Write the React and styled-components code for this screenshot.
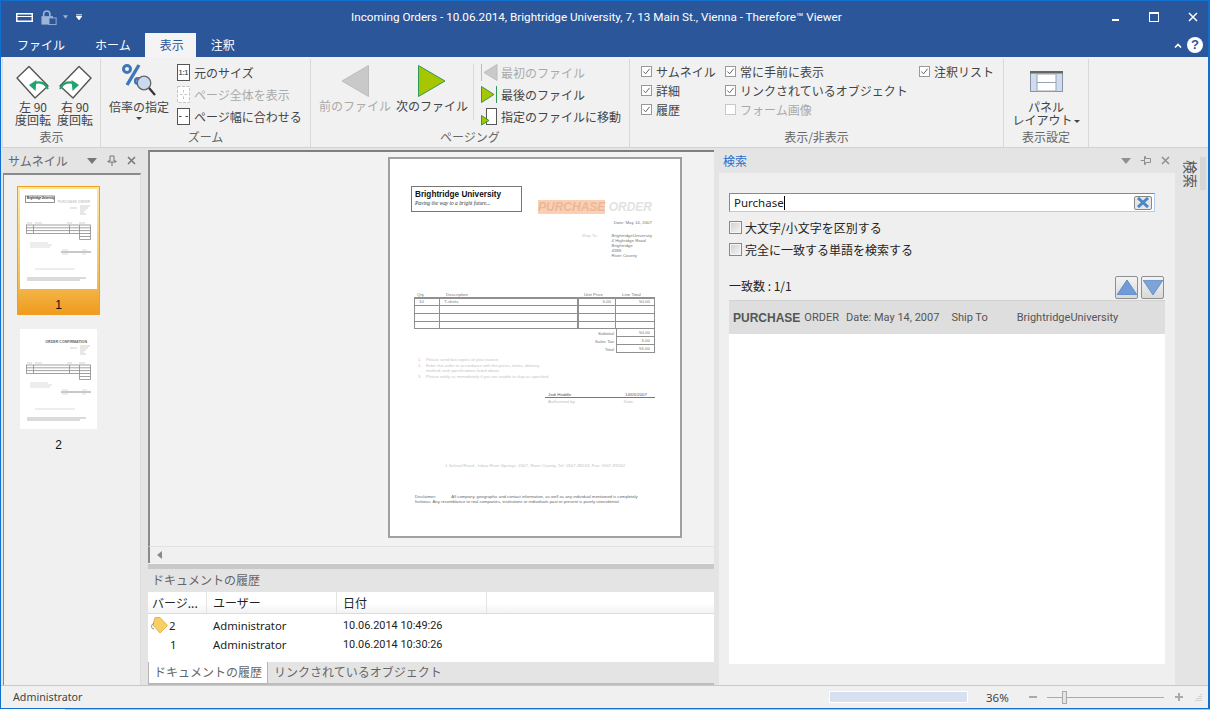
import React from "react";
import styled, { createGlobalStyle } from "styled-components";

const sans = `"Noto Sans", "Noto Sans CJK JP", sans-serif`;
const cjk = `"Noto Sans CJK JP", "Noto Sans", sans-serif`;

const GlobalStyle = createGlobalStyle`
  html, body {
    margin: 0;
    height: 710px;
    background: #fff;
    overflow: hidden;
  }
  * { box-sizing: border-box; }
`;

function RotateIcon({ flip }) {
  return (
    <svg width="34" height="34" viewBox="0 0 34 34" style={flip ? { transform: "scaleX(-1)" } : undefined}>
      <path d="M13 1.5 L32 21 L19 33 L1 13 Z" fill="#fff" stroke="#555" strokeWidth="1.4" strokeLinejoin="round" />
      <path d="M32 24 C29 18 24 16 18 18.5" fill="none" stroke="#22a36b" strokeWidth="2" />
      <path d="M13 20 L20.5 15 L19.5 26 Z" fill="#22a36b" />
    </svg>
  );
}

function ZoomPercentIcon() {
  return (
    <svg width="36" height="36" viewBox="0 0 36 36">
      <circle cx="6" cy="6" r="3.5" fill="none" stroke="#3f76b8" strokeWidth="3" />
      <circle cx="17" cy="18" r="2.8" fill="none" stroke="#3f76b8" strokeWidth="2.6" />
      <path d="M18 2 L6 22" stroke="#3f76b8" strokeWidth="3.4" />
      <circle cx="23" cy="20" r="6.8" fill="#c9d9ef" stroke="#666" strokeWidth="1.3" />
      <path d="M28 25 L34 32" stroke="#333" strokeWidth="2.2" />
    </svg>
  );
}

function SizeIcon({ kind, disabled }) {
  const c = disabled ? "#c4c4c4" : "#555";
  return (
    <svg width="13" height="17" viewBox="0 0 13 17">
      <rect x="0.5" y="0.5" width="12" height="16" fill="#fff" stroke={c} strokeDasharray={kind === "fit" ? "3 1.5" : undefined} />
      {kind === "actual" && (
        <text x="6.5" y="11" fontSize="6.5" fontFamily="Liberation Sans" fontWeight="bold" textAnchor="middle" fill="#555">1:1</text>
      )}
      {kind === "fit" && <path d="M6.5 4 V6.5 M6.5 10.5 V13 M3 8.5 H5.5 M7.5 8.5 H10" stroke={c} />}
      {kind === "width" && <path d="M2 8.5 H4.5 M8.5 8.5 H11" stroke="#444" strokeWidth="1.2" />}
    </svg>
  );
}

function BigArrow({ left, disabled }) {
  const fill = disabled ? "#c9c9c9" : "#a7c500";
  const line = disabled ? "#bdbdbd" : "#2d9a58";
  return (
    <svg width="28" height="32" viewBox="0 0 28 32">
      <path d={left ? "M27.5 0.5 V31.5 L1 16 Z" : "M0.5 0.5 V31.5 L27 16 Z"} fill={fill} stroke={line} strokeWidth="1" />
    </svg>
  );
}

function FirstIcon() {
  return (
    <svg width="17" height="17" viewBox="0 0 17 17">
      <path d="M0.5 0 V17" stroke="#bdbdbd" />
      <path d="M16 0.5 V16.5 L3 8.5 Z" fill="#c9c9c9" stroke="#bdbdbd" />
    </svg>
  );
}

function LastIcon() {
  return (
    <svg width="17" height="17" viewBox="0 0 17 17">
      <path d="M0.5 0.5 V16.5 L13 8.5 Z" fill="#a7c500" stroke="#2d9a58" />
      <path d="M15.5 0 V17" stroke="#2d9a58" />
    </svg>
  );
}

function GotoIcon() {
  return (
    <svg width="17" height="18" viewBox="0 0 17 18">
      <rect x="5.5" y="0.5" width="10" height="16" fill="#fff" stroke="#555" />
      <path d="M0.5 7.5 V17 L8 12.5 Z" fill="#a7c500" stroke="#2d9a58" />
    </svg>
  );
}

function PanelIcon() {
  return (
    <svg width="33" height="21" viewBox="0 0 33 21">
      <rect x="0.5" y="0.5" width="32" height="20" fill="#cfdcef" stroke="#8a93a0" />
      <rect x="0" y="0" width="33" height="2.5" fill="#666" />
      <rect x="7" y="3" width="19" height="17" fill="#fff" stroke="#9aa3b0" />
      <path d="M7 11.5 H26" stroke="#9aa3b0" />
    </svg>
  );
}

function CheckMark() {
  return (
    <svg width="9" height="9" viewBox="0 0 9 9">
      <path d="M1.4 4.5 L3.6 6.8 L7.6 1.8" fill="none" stroke="#666" strokeWidth="1" />
    </svg>
  );
}

function PaneButtons({ subtle }) {
  const c = subtle ? "#8f8f8f" : "#777";
  return (
    <PaneTools>
      <svg width="10" height="6" viewBox="0 0 10 6"><path d="M0 0 H10 L5 6 Z" fill={c} /></svg>
      <svg width="10" height="11" viewBox="0 0 10 11" style={subtle ? { transform: "rotate(90deg)" } : undefined}>
        <path d="M3 1 H7 V6 H9 V7 H1 V6 H3 Z M5 7 V11" fill="none" stroke={c} />
      </svg>
      <svg width="9" height="9" viewBox="0 0 9 9"><path d="M1 1 L8 8 M8 1 L1 8" stroke={c} strokeWidth="1.5" /></svg>
    </PaneTools>
  );
}

function ThumbDrawing({ second }) {
  return (
    <svg width="77" height="100" viewBox="0 0 77 100">
      <rect width="77" height="100" fill="#fff" />
      {second ? (
        <text x="67" y="14" fontSize="3.6" fontFamily="Liberation Sans" fontWeight="bold" textAnchor="end" fill="#666">ORDER CONFIRMATION</text>
      ) : (
        <>
          <rect x="5.5" y="7" width="29" height="6.5" fill="#fff" stroke="#777" strokeWidth="0.8" />
          <text x="7" y="10" fontSize="2.6" fontFamily="Liberation Sans" fontWeight="bold" fill="#222">Brightridge University</text>
          <text x="70" y="14" fontSize="3.4" fontFamily="Liberation Sans" fontWeight="bold" textAnchor="end" fill="#ccc">PURCHASE ORDER</text>
        </>
      )}
      <path d="M50 19 H57 M60 17 H70 M60 19 H68 M60 21 H66 M60 23 H64 M60 25 H66" stroke="#bbb" strokeWidth="0.7" />
      <path d="M7 34 H12 M15 34 H22 M47 34 H52 M59 34 H65" stroke="#bbb" strokeWidth="0.7" />
      <g stroke="#8a8a8a" strokeWidth="0.8" fill="none">
        <rect x="6.5" y="36" width="64" height="8.5" />
        <path d="M6.5 38.8 H70.5 M6.5 41.6 H70.5 M13.5 36 V44.5 M49.5 36 V44.5 M59.5 36 V50.5 M59.5 47.5 H70.5 M59.5 50.5 H70.5 M70.5 44 V50.5" />
      </g>
      <path d="M10 54 H28 M10 56 H32 M10 58 H30" stroke="#ccc" strokeWidth="0.7" />
      <path d="M41 63 H71" stroke="#777" strokeWidth="0.8" />
      <path d="M42 61 H48 M62 61 H67 M42 65 H48 M62 65 H66" stroke="#c4c4c4" strokeWidth="0.6" />
      <path d="M15 80 H55" stroke="#ccc" strokeWidth="0.7" />
      <path d="M7 89 H66 M7 91 H60" stroke="#999" strokeWidth="0.7" />
    </svg>
  );
}

function DocumentPage() {
  return (
    <Page>
      <PageHeader>
        <Brand>
          <BrandName>Brightridge University</BrandName>
          <BrandLine>Paving the way to a bright future...</BrandLine>
        </Brand>
        <PageHeaderRight>
          <DocTitle><mark>PURCHASE</mark> ORDER</DocTitle>
          <DocDate>Date: May 14, 2007</DocDate>
          <ShipRow>
            <ShipLabel>Ship To:</ShipLabel>
            <ShipAddress>
              <div>BrightridgeUniversity</div>
              <div>4 Highridge Road</div>
              <div>Brightridge</div>
              <div>4588</div>
              <div>River County</div>
            </ShipAddress>
          </ShipRow>
        </PageHeaderRight>
      </PageHeader>

      <ItemHeads>
        <span>Qty</span><span>Description</span><span>Unit Price</span><span>Line Total</span>
      </ItemHeads>
      <ItemTable>
        <tbody>
          <tr>
            <td>10</td><td>T-shirts</td><NumCell>5.00</NumCell><NumCell>50.00</NumCell>
          </tr>
          {[0, 1, 2].map((i) => (
            <tr key={i}><td /><td /><td /><td /></tr>
          ))}
        </tbody>
      </ItemTable>
      {[["Subtotal", "50.00"], ["Sales Tax", "5.00"], ["Total", "55.00"]].map(([label, value]) => (
        <TotalRow key={label}>
          <span>{label}</span>
          <TotalValue>{value}</TotalValue>
        </TotalRow>
      ))}

      <Terms>
        <li>Please send two copies of your invoice.</li>
        <li>Enter this order in accordance with the prices, terms, delivery<br />method, and specifications listed above.</li>
        <li>Please notify us immediately if you are unable to ship as specified.</li>
      </Terms>

      <SignBlock>
        <SignTop><span>Jodi Hoddle</span><span>14/05/2007</span></SignTop>
        <SignBottom><span>Authorised by</span><span>Date</span></SignBottom>
      </SignBlock>

      <FootAddress>1 School Road , Isboa River Springs, 4567, River County, Tel: 0567-89243, Fax: 0567-89244</FootAddress>
      <Disclaimer>
        Disclaimer:&nbsp;&nbsp;&nbsp;&nbsp;&nbsp;&nbsp;&nbsp;&nbsp;&nbsp;&nbsp;&nbsp;&nbsp;&nbsp;All company, geographic and contact information, as well as any individual mentioned is completely<br />
        fictitious.  Any resemblance to real companies, institutions or individuals past or present is purely coincidental.
      </Disclaimer>
    </Page>
  );
}

export default function App() {
  return (
    <>
      <GlobalStyle />
      <Window>
        <TitleBar>
          <QuickAccess>
            <svg width="17" height="9" viewBox="0 0 17 9"><rect x="0.75" y="0.75" width="15.5" height="7.5" fill="none" stroke="#fff" strokeWidth="1.5" /><path d="M1 3.5 H16" stroke="#fff" /></svg>
            <svg width="16" height="17" viewBox="0 0 18 17">
              <path d="M3 8 V4.5 C3 0 10 0 10 4.5 V8" fill="none" stroke="#9db4d8" strokeWidth="1.8" />
              <rect x="0.5" y="7" width="13" height="9.5" fill="#9db4d8" />
              <rect x="9" y="9" width="8" height="7.5" fill="#2b579a" stroke="#9db4d8" />
            </svg>
            <svg width="5" height="4" viewBox="0 0 6 4"><path d="M0 0 H6 L3 4 Z" fill="#9db4d8" /></svg>
            <svg width="6" height="6" viewBox="0 0 6 6"><path d="M0 0.5 H6 M0 2 H6 L3 6 Z" fill="#fff" stroke="#fff" strokeWidth="0.6" /></svg>
          </QuickAccess>
          <TitleText>Incoming Orders - 10.06.2014, Brightridge University, 7, 13 Main St., Vienna - Therefore™ Viewer</TitleText>
          <WindowButtons>
            <svg width="8" height="10" viewBox="0 0 8 10"><rect y="7" width="7" height="2" fill="#fff" /></svg>
            <svg width="10" height="10" viewBox="0 0 10 10"><rect x="0.5" y="0.5" width="9" height="9" fill="none" stroke="#fff" /><rect width="10" height="2" fill="#fff" /></svg>
            <svg width="10" height="10" viewBox="0 0 10 10"><path d="M1 1 L9 9 M9 1 L1 9" stroke="#fff" strokeWidth="1.5" /></svg>
          </WindowButtons>
        </TitleBar>

        <TabRow>
          <Tab>ファイル</Tab>
          <Tab>ホーム</Tab>
          <Tab $active>表示</Tab>
          <Tab>注釈</Tab>
          <TabRowEnd>
            <svg width="8" height="5" viewBox="0 0 8 5"><path d="M1 4.5 L4 1.5 L7 4.5" fill="none" stroke="#fff" strokeWidth="1.6" /></svg>
            <HelpBadge>?</HelpBadge>
          </TabRowEnd>
        </TabRow>

        <Ribbon>
          <Group $width={98} $pad="6px 0 0 13px">
            <GroupBody $gap={8}>
              <BigButton $width={34}>
                <RotateIcon />
                <BigLabel>左 90<br />度回転</BigLabel>
              </BigButton>
              <BigButton $width={34}>
                <RotateIcon flip />
                <BigLabel>右 90<br />度回転</BigLabel>
              </BigButton>
            </GroupBody>
            <GroupLabel>表示</GroupLabel>
          </Group>

          <Group $width={210} $pad="4px 0 0 8px">
            <GroupBody $gap={8}>
              <BigButton $width={60}>
                <ZoomPercentIcon />
                <BigLabel>倍率の指定<DownCaret /></BigLabel>
              </BigButton>
              <SmallStack $top={1}>
                <SmallButton><SizeIcon kind="actual" />元のサイズ</SmallButton>
                <SmallButton $disabled><SizeIcon kind="fit" disabled />ページ全体を表示</SmallButton>
                <SmallButton><SizeIcon kind="width" />ページ幅に合わせる</SmallButton>
              </SmallStack>
            </GroupBody>
            <GroupLabel>ズーム</GroupLabel>
          </Group>

          <Group $width={319} $pad="6px 0 0 8px">
            <GroupBody $gap={5}>
              <BigButton $width={72} $disabled>
                <BigArrow left disabled />
                <BigLabel $top={2}>前のファイル</BigLabel>
              </BigButton>
              <BigButton $width={72}>
                <BigArrow />
                <BigLabel $top={2}>次のファイル</BigLabel>
              </BigButton>
              <SmallStack $divider $top={-1}>
                <SmallButton $disabled $gap={3}><FirstIcon />最初のファイル</SmallButton>
                <SmallButton $gap={3}><LastIcon />最後のファイル</SmallButton>
                <SmallButton $gap={3}><GotoIcon />指定のファイルに移動</SmallButton>
              </SmallStack>
            </GroupBody>
            <GroupLabel>ページング</GroupLabel>
          </Group>

          <Group $width={374} $pad="3px 0 0 11px">
            <CheckColumns>
              <CheckColumn $width={84}>
                <CheckLine><CheckBox $on><CheckMark /></CheckBox>サムネイル</CheckLine>
                <CheckLine><CheckBox $on><CheckMark /></CheckBox>詳細</CheckLine>
                <CheckLine><CheckBox $on><CheckMark /></CheckBox>履歴</CheckLine>
              </CheckColumn>
              <CheckColumn $width={194}>
                <CheckLine><CheckBox $on><CheckMark /></CheckBox>常に手前に表示</CheckLine>
                <CheckLine><CheckBox $on><CheckMark /></CheckBox>リンクされているオブジェクト</CheckLine>
                <CheckLine $disabled><CheckBox $disabled />フォーム画像</CheckLine>
              </CheckColumn>
              <CheckColumn>
                <CheckLine><CheckBox $on><CheckMark /></CheckBox>注釈リスト</CheckLine>
              </CheckColumn>
            </CheckColumns>
            <GroupLabel>表示/非表示</GroupLabel>
          </Group>

          <Group $width={85} $pad="12px 0 0 0">
            <GroupBody $center>
              <BigButton $width={85}>
                <PanelIcon />
                <BigLabel $top={8}>パネル<br />レイアウト<DownCaret $inline /></BigLabel>
              </BigButton>
            </GroupBody>
            <GroupLabel>表示設定</GroupLabel>
          </Group>
        </Ribbon>

        <Workspace>
          <ThumbPane>
            <PaneHeader>
              <PaneTitle>サムネイル</PaneTitle>
              <PaneButtons />
            </PaneHeader>
            <ThumbList>
              <ThumbCard $selected>
                <ThumbDrawing />
                <ThumbNumber>1</ThumbNumber>
              </ThumbCard>
              <ThumbCard>
                <ThumbDrawing second />
                <ThumbNumber>2</ThumbNumber>
              </ThumbCard>
            </ThumbList>
          </ThumbPane>

          <CenterPane>
            <DocArea>
              <DocumentPage />
            </DocArea>
            <HScroll>
              <svg width="5" height="8" viewBox="0 0 5 8"><path d="M5 0 V8 L0 4 Z" fill="#888" /></svg>
            </HScroll>
            <HSplitter />
            <HistoryTitle>ドキュメントの履歴</HistoryTitle>
            <ColumnHead>
              <HeadCell $width={59}>バージ...</HeadCell>
              <HeadCell $width={130}>ユーザー</HeadCell>
              <HeadCell $width={150}>日付</HeadCell>
              <HeadCell />
            </ColumnHead>
            <HistoryRows>
              <HistoryRow>
                <VersionCell>
                  <svg width="17" height="17" viewBox="0 0 17 17">
                    <path d="M4 0.5 L9 0.5 L16.5 8.5 L9 16 L2 8 Z" fill="#f7cf66" stroke="#e2b347" />
                    <path d="M3 6 C-0.5 8 0 12 3 12" fill="none" stroke="#888" />
                  </svg>
                  2
                </VersionCell>
                <UserCell>Administrator</UserCell>
                <DateCell>10.06.2014 10:49:26</DateCell>
              </HistoryRow>
              <HistoryRow>
                <VersionCell $plain>1</VersionCell>
                <UserCell>Administrator</UserCell>
                <DateCell>10.06.2014 10:30:26</DateCell>
              </HistoryRow>
            </HistoryRows>
            <BottomTabs>
              <BottomTab $active>ドキュメントの履歴</BottomTab>
              <BottomTab>リンクされているオブジェクト</BottomTab>
            </BottomTabs>
          </CenterPane>

          <SearchPane>
            <PaneHeader $search>
              <PaneTitle $blue>検索</PaneTitle>
              <PaneButtons subtle />
            </PaneHeader>
            <SearchBody>
              <SearchInput>
                <span>Purchase</span>
                <Caret />
                <ClearButton>
                  <svg width="14" height="11" viewBox="0 0 14 11"><path d="M2 1 L12 10 M12 1 L2 10" stroke="#4d86c6" strokeWidth="3" /></svg>
                </ClearButton>
              </SearchInput>
              <OptionLine><OptionBox />大文字/小文字を区別する</OptionLine>
              <OptionLine><OptionBox />完全に一致する単語を検索する</OptionLine>
              <MatchBar>
                <MatchCount>一致数 : 1/1</MatchCount>
                <MatchButtons>
                  <MatchButton><svg width="20" height="15" viewBox="0 0 20 15"><path d="M10 0 L20 15 H0 Z" fill="#6f9bd6" stroke="#5d8ac6" /></svg></MatchButton>
                  <MatchButton><svg width="20" height="15" viewBox="0 0 20 15"><path d="M0 0 H20 L10 15 Z" fill="#7ea3d6" stroke="#6a93c9" /></svg></MatchButton>
                </MatchButtons>
              </MatchBar>
              <ResultRow>
                <strong>PURCHASE</strong>
                <span>ORDER</span>
                <span>Date: May 14, 2007</span>
                <span>Ship To</span>
                <span>BrightridgeUniversity</span>
              </ResultRow>
              <ResultList />
            </SearchBody>
          </SearchPane>

          <SideStrip>
            <SideLabel>検索</SideLabel>
            <SideScroll />
          </SideStrip>
        </Workspace>

        <StatusBar>
          <StatusUser>Administrator</StatusUser>
          <ProgressTrack />
          <ZoomValue>36%</ZoomValue>
          <ZoomStep>
            <svg width="8" height="2" viewBox="0 0 8 2"><rect width="8" height="2" fill="#aaa" /></svg>
          </ZoomStep>
          <ZoomSlider><ZoomThumb /></ZoomSlider>
          <ZoomStep $plus>
            <svg width="8" height="8" viewBox="0 0 8 8"><path d="M0 3 H8 V5 H0 Z M3 0 H5 V8 H3 Z" fill="#aaa" /></svg>
          </ZoomStep>
          <svg width="7" height="7" viewBox="0 0 7 7"><path d="M6 0 V1 M6 2 V3 M4 2 V3 M6 4 V5 M4 4 V5 M2 4 V5 M6 6 V7 M4 6 V7 M2 6 V7 M0 6 V7" stroke="#b5b5b5" /></svg>
        </StatusBar>
      </Window>
      <BehindWindow />
    </>
  );
}

const Window = styled.div`
  width: 1210px;
  height: 709px;
  border: 1px solid #1170cf;
  border-right-width: 2px;
  background: #e4e4e4;
  display: flex;
  flex-direction: column;
  font-family: ${cjk};
  font-size: 12px;
  color: #333;
  overflow: hidden;
`;

const BehindWindow = styled.div`
  height: 1px;
  margin-left: 65px;
  background: #c4c4c4;
`;

const TitleBar = styled.div`
  height: 32px;
  background: #2b579a;
  display: flex;
  align-items: center;
  flex: none;
`;

const QuickAccess = styled.div`
  width: 350px;
  padding-left: 15px;
  display: flex;
  align-items: center;
  gap: 6px;
  svg:nth-child(1) { margin-right: 2px; }
  svg:nth-child(3) { margin-right: 2px; }
`;

const TitleText = styled.div`
  font-family: Roboto, "Noto Sans", sans-serif;
  font-size: 11.7px;
  color: #fff;
  white-space: nowrap;
`;

const WindowButtons = styled.div`
  margin-left: auto;
  padding-right: 10px;
  display: flex;
  align-items: center;
  gap: 29px;
`;

const TabRow = styled.div`
  height: 24px;
  background: #2b579a;
  display: flex;
  align-items: flex-end;
  padding-left: 1px;
  flex: none;
`;

const Tab = styled.div`
  height: 24px;
  line-height: 23px;
  padding: ${(p) => (p.$active ? "0 12px 0 15px" : "0 15px")};
  margin-left: ${(p) => (p.$active ? "-1px" : "0")};
  font-size: 12px;
  background: ${(p) => (p.$active ? "#f4f4f4" : "transparent")};
  color: ${(p) => (p.$active ? "#2b579a" : "#fff")};
`;

const TabRowEnd = styled.div`
  margin-left: auto;
  padding: 0 5px 4px 0;
  display: flex;
  align-items: center;
  gap: 5px;
`;

const HelpBadge = styled.div`
  width: 16px;
  height: 16px;
  border-radius: 50%;
  background: #fff;
  color: #2b579a;
  font: bold 13px/16px "Liberation Sans", sans-serif;
  text-align: center;
`;

const Ribbon = styled.div`
  height: 91px;
  flex: none;
  margin: 0 0 0 1px;
  background: #f1f1f1;
  border-left: 1px solid #dcdcdc;
  border-bottom: 1px solid #d2d2d2;
  display: flex;
`;

const Group = styled.div`
  width: ${(p) => p.$width}px;
  height: 88px;
  margin-top: 2px;
  padding: ${(p) => p.$pad};
  border-right: 1px solid #d8d8d8;
  display: flex;
  flex-direction: column;
  position: relative;
  flex: none;
`;

const GroupBody = styled.div`
  display: flex;
  gap: ${(p) => p.$gap || 0}px;
  justify-content: ${(p) => (p.$center ? "center" : "flex-start")};
  flex: 1;
`;

const GroupLabel = styled.div`
  position: absolute;
  left: 0;
  right: 0;
  bottom: 2px;
  text-align: center;
  color: #666;
  font-size: 12px;
  line-height: 16px;
`;

const BigButton = styled.div`
  width: ${(p) => p.$width}px;
  display: flex;
  flex-direction: column;
  align-items: center;
  color: ${(p) => (p.$disabled ? "#aaa" : "#444")};
  svg { flex: none; }
`;

const BigLabel = styled.div`
  margin-top: ${(p) => p.$top || 1}px;
  text-align: center;
  line-height: 13px;
  white-space: nowrap;
  font-size: 12px;
`;

const DownCaret = styled.span`
  display: ${(p) => (p.$inline ? "inline-block" : "block")};
  width: 0;
  height: 0;
  margin: ${(p) => (p.$inline ? "0 0 2px 1px" : "4px auto 0")};
  border-left: 3px solid transparent;
  border-right: 3px solid transparent;
  border-top: 3px solid #444;
`;

const SmallStack = styled.div`
  display: flex;
  flex-direction: column;
  gap: 5px;
  margin-top: ${(p) => p.$top}px;
  ${(p) => p.$divider && "border-left: 1px solid #d8d8d8; padding-left: 7px; height: 56px;"}
`;

const SmallButton = styled.div`
  height: 17px;
  display: flex;
  align-items: center;
  gap: ${(p) => p.$gap || 4}px;
  white-space: nowrap;
  font-size: 12px;
  color: ${(p) => (p.$disabled ? "#aaa" : "#444")};
`;

const CheckColumns = styled.div`
  display: flex;
`;

const CheckColumn = styled.div`
  width: ${(p) => (p.$width ? `${p.$width}px` : "auto")};
  display: flex;
  flex-direction: column;
  gap: 1px;
`;

const CheckLine = styled.div`
  height: 18px;
  display: flex;
  align-items: center;
  gap: 4px;
  white-space: nowrap;
  color: ${(p) => (p.$disabled ? "#aaa" : "#444")};
`;

const CheckBox = styled.span`
  width: 11px;
  height: 11px;
  flex: none;
  background: #fff;
  border: 1px solid ${(p) => (p.$disabled ? "#c8c8c8" : "#999")};
  display: flex;
  align-items: center;
  justify-content: center;
`;

const Workspace = styled.div`
  flex: 1;
  min-height: 0;
  display: flex;
`;

const ThumbPane = styled.div`
  width: 146px;
  margin-right: 1px;
  display: flex;
  flex-direction: column;
  flex: none;
`;

const PaneHeader = styled.div`
  height: 25px;
  flex: none;
  display: flex;
  align-items: center;
  padding: ${(p) => (p.$search ? "0 5px 0 4px" : "0 11px 0 7px")};
`;

const PaneTitle = styled.div`
  flex: 1;
  font-size: 12px;
  color: ${(p) => (p.$blue ? "#2b6fc9" : "#666")};
`;

const PaneTools = styled.div`
  display: flex;
  align-items: center;
  gap: 10px;
`;

const ThumbList = styled.div`
  flex: 1;
  margin: 0 6px 0 2px;
  padding: 11px 0 0 13px;
  background: #f0f0f0;
  border-top: 2px solid #8a8a8a;
  border-left: 1px solid #8a8a8a;
  border-right: 1px solid #dcdcdc;
  display: flex;
  flex-direction: column;
  gap: 11px;
`;

const ThumbCard = styled.div`
  width: 83px;
  padding: 3px 3px 0;
  display: flex;
  flex-direction: column;
  align-items: center;
  background: ${(p) => (p.$selected ? "linear-gradient(#fde99f, #f5c25c 70%, #ef9a1c)" : "transparent")};
  box-shadow: ${(p) => (p.$selected ? "inset 0 0 0 1px #ef9f22" : "none")};
  svg { display: block; flex: none; }
`;

const ThumbNumber = styled.div`
  height: 26px;
  font: 12px/32px "Liberation Sans", sans-serif;
  color: #111;
`;

const CenterPane = styled.div`
  width: 566px;
  padding-top: 2px;
  display: flex;
  flex-direction: column;
  flex: none;
`;

const DocArea = styled.div`
  flex: 1;
  min-height: 0;
  border-top: 2px solid #808080;
  border-left: 2px solid #8a8a8a;
  background: #f2f2f2;
  padding: 5px 0 0 238px;
`;

const Page = styled.div`
  width: 294px;
  height: 381px;
  background: #fff;
  border: 2px solid #a0a0a0;
  font-family: "Liberation Sans", sans-serif;
  font-size: 4.4px;
  line-height: 5px;
  color: #777;
`;

const PageHeader = styled.div`
  display: flex;
  justify-content: space-between;
  padding: 27px 28px 0 21px;
`;

const Brand = styled.div`
  width: 111px;
  height: 26px;
  border: 1px solid #777;
  padding: 2px 3px;
`;

const BrandName = styled.div`
  font-size: 8.2px;
  line-height: 11px;
  font-weight: bold;
  color: #111;
`;

const BrandLine = styled.div`
  font-family: "Liberation Serif", serif;
  font-style: italic;
  font-size: 5.4px;
  line-height: 7px;
  color: #333;
`;

const PageHeaderRight = styled.div`
  width: 114px;
`;

const DocTitle = styled.div`
  margin-top: 15px;
  height: 13px;
  font-size: 12px;
  line-height: 13px;
  font-style: italic;
  font-weight: bold;
  white-space: nowrap;
  text-align: right;
  color: #e2e2e2;
  mark {
    background: #fbd0b2;
    color: #eab79a;
  }
`;

const DocDate = styled.div`
  margin-top: 6px;
  text-align: right;
`;

const ShipRow = styled.div`
  display: flex;
  margin-top: 8px;
`;

const ShipLabel = styled.div`
  width: 77px;
  padding-left: 44px;
  color: #c8c8c8;
`;

const ShipAddress = styled.div`
  white-space: nowrap;
  color: #777;
`;

const ItemHeads = styled.div`
  margin: 34px 0 0 24px;
  width: 240px;
  height: 5px;
  display: grid;
  grid-template-columns: 29px 138px 38px 35px;
  padding-left: 3px;
`;

const ItemTable = styled.table`
  width: 241px;
  margin-left: 24px;
  border-collapse: collapse;
  table-layout: fixed;
  border-top: 2px solid #909090;
  tr { height: 7.7px; }
  td {
    padding: 0 4px;
    border: 1px solid #909090;
    line-height: 6px;
    font-size: 4.4px;
  }
  td:nth-child(1) { width: 25px; }
  td:nth-child(2) { width: 138px; }
  td:nth-child(3) { width: 38px; border-left-width: 2px; }
  td:nth-child(4) { width: 39px; }
`;

const NumCell = styled.td`
  text-align: right;
`;

const TotalRow = styled.div`
  width: 241px;
  height: 8px;
  margin-left: 24px;
  display: flex;
  justify-content: flex-end;
  align-items: center;
  gap: 2px;
`;

const TotalValue = styled.div`
  width: 39px;
  height: 8px;
  padding-right: 4px;
  border: 1px solid #909090;
  border-top-width: 0;
  text-align: right;
  line-height: 7px;
`;

const Terms = styled.ol`
  margin: 4px 0 0 28px;
  padding: 0;
  list-style: none;
  counter-reset: term;
  color: #c4c4c4;
  font-size: 4.2px;
  line-height: 5px;
  li {
    margin-bottom: 1px;
    display: flex;
    counter-increment: term;
    white-space: nowrap;
  }
  li > br { display: block; }
  li::before {
    content: counter(term) ".";
    flex: none;
    width: 8px;
  }
`;

const SignBlock = styled.div`
  margin: 14px 0 0 155px;
  width: 110px;
`;

const SignTop = styled.div`
  display: flex;
  justify-content: space-between;
  padding: 0 8px 0 3px;
  border-bottom: 1px solid #777;
  line-height: 4px;
  color: #555;
`;

const SignBottom = styled.div`
  display: flex;
  justify-content: space-between;
  padding: 1px 22px 0 3px;
  color: #bbb;
`;

const FootAddress = styled.div`
  margin: 59px 0 0 0;
  text-align: center;
  color: #c4c4c4;
  white-space: nowrap;
`;

const Disclaimer = styled.div`
  margin: 26px 0 0 25px;
  white-space: nowrap;
  font-size: 4.25px;
  color: #666;
`;

const HScroll = styled.div`
  height: 17px;
  flex: none;
  padding-left: 7px;
  display: flex;
  align-items: center;
  background: #f0f0f0;
  border-left: 2px solid #8a8a8a;
  border-top: 1px solid #e2e2e2;
`;

const HSplitter = styled.div`
  height: 6px;
  flex: none;
  background: #c9c9c9;
  border-top: 1px solid #f5f5f5;
`;

const HistoryTitle = styled.div`
  height: 23px;
  flex: none;
  padding-left: 4px;
  line-height: 21px;
  color: #666;
`;

const ColumnHead = styled.div`
  height: 22px;
  flex: none;
  display: flex;
  background: linear-gradient(#fff 50%, #f3f3f3);
  border-bottom: 1px solid #dcdcdc;
`;

const HeadCell = styled.div`
  width: ${(p) => (p.$width ? `${p.$width}px` : "auto")};
  flex: ${(p) => (p.$width ? "none" : 1)};
  padding-left: ${(p) => (p.$width === 59 ? 4 : 6)}px;
  border-right: ${(p) => (p.$width ? "1px solid #e4e4e4" : "none")};
  line-height: 22px;
  color: #222;
  white-space: nowrap;
`;

const HistoryRows = styled.div`
  height: 48px;
  flex: none;
  padding-top: 2px;
  background: #fff;
`;

const HistoryRow = styled.div`
  height: 19px;
  display: flex;
  align-items: center;
  font-family: ${sans};
  font-size: 11.3px;
  color: #222;
`;

const VersionCell = styled.div`
  width: 65px;
  padding-left: ${(p) => (p.$plain ? "22px" : "3px")};
  display: flex;
  align-items: center;
  gap: 1px;
`;

const UserCell = styled.div`
  width: 130px;
`;

const DateCell = styled.span`
  font-family: Roboto, sans-serif;
  font-size: 10.9px;
`;

const BottomTabs = styled.div`
  height: 23px;
  flex: none;
  display: flex;
  border-bottom: 2px solid #bdbdbd;
`;

const BottomTab = styled.div`
  padding: 0 ${(p) => (p.$active ? "5px" : "6px")};
  height: 22px;
  line-height: 19px;
  color: #666;
  background: ${(p) => (p.$active ? "#fff" : "transparent")};
  border: ${(p) => (p.$active ? "1px solid #b5b5b5" : "none")};
  border-top: none;
`;

const SearchPane = styled.div`
  width: 456px;
  margin-left: 5px;
  display: flex;
  flex-direction: column;
  flex: none;
`;

const SearchBody = styled.div`
  flex: 1;
  display: flex;
  flex-direction: column;
  padding: 20px 10px 21px;
  background: #efefef;
`;

const SearchInput = styled.div`
  width: 426px;
  height: 19px;
  flex: none;
  background: #fff;
  border: 1px solid #5d93c9;
  border-bottom-color: #aed0ee;
  border-right-color: #aed0ee;
  display: flex;
  align-items: center;
  padding-left: 4px;
  font-family: ${sans};
  font-size: 11.5px;
  color: #222;
`;

const Caret = styled.i`
  width: 1px;
  height: 14px;
  background: #000;
`;

const ClearButton = styled.div`
  margin-left: auto;
  margin-right: 2px;
  width: 18px;
  height: 14px;
  border: 1px solid #888;
  border-radius: 2px;
  background: #e6e6e6;
  display: flex;
  align-items: center;
  justify-content: center;
`;

const OptionLine = styled.div`
  height: 14px;
  margin-top: 8px;
  display: flex;
  align-items: center;
  gap: 3px;
  color: #222;
  white-space: nowrap;
`;

const OptionBox = styled.span`
  width: 13px;
  height: 13px;
  flex: none;
  border: 1px solid #888;
  background: linear-gradient(135deg, #cfcfcf, #f6f6f6);
  box-shadow: inset 0 0 0 1px #f4f4f4;
`;

const MatchBar = styled.div`
  height: 24px;
  flex: none;
  margin-top: 19px;
  padding-right: 1px;
  display: flex;
  align-items: center;
  justify-content: space-between;
  color: #222;
`;

const MatchCount = styled.span`
  margin-bottom: 4px;
`;

const MatchButtons = styled.div`
  display: flex;
  gap: 3px;
`;

const MatchButton = styled.div`
  width: 23px;
  height: 23px;
  border: 1px solid #8f8f8f;
  border-radius: 2px;
  background: linear-gradient(#f3f3f3, #d9d9d9);
  display: flex;
  align-items: center;
  justify-content: center;
`;

const ResultRow = styled.div`
  height: 34px;
  flex: none;
  margin-top: 1px;
  padding-left: 4px;
  background: #dedede;
  border-top: 1px solid #d2d2d2;
  display: flex;
  align-items: center;
  font-family: Roboto, sans-serif;
  font-size: 11px;
  color: #555;
  white-space: nowrap;
  strong {
    margin-right: 4px;
    font-family: "Liberation Sans", sans-serif;
    font-size: 12px;
  }
  span:nth-of-type(1) { margin-right: 7px; }
  span:nth-of-type(2) { margin-right: 12px; }
  span:nth-of-type(3) { margin-right: 29px; }
`;

const ResultList = styled.div`
  flex: 1;
  background: #fff;
`;

const SideStrip = styled.div`
  flex: 1;
  display: flex;
  padding: 9px 0 0 5px;
`;

const SideLabel = styled.div`
  width: 20px;
  height: 32px;
  padding-top: 3px;
  writing-mode: vertical-rl;
  text-orientation: sideways;
  color: #555;
  font-size: 14px;
  line-height: 18px;
  white-space: nowrap;
`;

const SideScroll = styled.div`
  width: 6px;
  height: 33px;
  background: #d6d6d6;
`;

const StatusBar = styled.div`
  height: 23px;
  flex: none;
  display: flex;
  align-items: center;
  background: #f0f0f0;
  border-top: 1px solid #c8c8c8;
  padding: 0 6px 0 12px;
  font-family: ${sans};
  font-size: 10.7px;
  color: #444;
`;

const StatusUser = styled.div`
  width: 816px;
`;

const ProgressTrack = styled.div`
  width: 139px;
  height: 12px;
  background: #d6e0f1;
  border: 1px solid #fff;
`;

const ZoomValue = styled.div`
  width: 61px;
  padding-left: 18px;
  font-size: 11.5px;
`;

const ZoomStep = styled.div`
  width: ${(p) => (p.$plus ? "20px" : "18px")};
  margin-left: ${(p) => (p.$plus ? "11px" : "0")};
  display: flex;
`;

const ZoomSlider = styled.div`
  width: 117px;
  height: 1px;
  background: #aaa;
  position: relative;
`;

const ZoomThumb = styled.div`
  position: absolute;
  left: 15px;
  top: -6px;
  width: 5px;
  height: 13px;
  background: #e4e4e4;
  border: 1px solid #aaa;
`;
